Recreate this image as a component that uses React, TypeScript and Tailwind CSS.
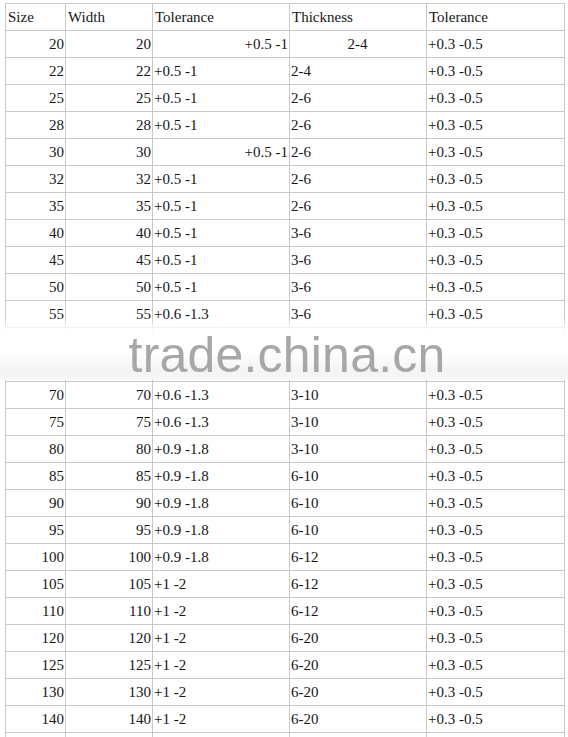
import React from "react";

type Row = {
  size: string;
  width: string;
  tol: string;
  thick: string;
  tol2: string;
  // some cells in the sheet keep odd alignments
  tolAlign?: "left" | "right";
  thickAlign?: "left" | "center";
};

const r = (size: string, tol: string, thick: string, extra: Partial<Row> = {}): Row => ({
  size,
  width: size,
  tol,
  thick,
  tol2: size ? "+0.3 -0.5" : "",
  ...extra,
});

const rows: Row[] = [
  r("20", "+0.5 -1", "2-4", { tolAlign: "right", thickAlign: "center" }),
  r("22", "+0.5 -1", "2-4"),
  r("25", "+0.5 -1", "2-6"),
  r("28", "+0.5 -1", "2-6"),
  r("30", "+0.5 -1", "2-6", { tolAlign: "right" }),
  r("32", "+0.5 -1", "2-6"),
  r("35", "+0.5 -1", "2-6"),
  r("40", "+0.5 -1", "3-6"),
  r("45", "+0.5 -1", "3-6"),
  r("50", "+0.5 -1", "3-6"),
  r("55", "+0.6 -1.3", "3-6"),
  // rows under the watermark, left blank
  r("", "", ""),
  r("", "", ""),
  r("70", "+0.6 -1.3", "3-10"),
  r("75", "+0.6 -1.3", "3-10"),
  r("80", "+0.9 -1.8", "3-10"),
  r("85", "+0.9 -1.8", "6-10"),
  r("90", "+0.9 -1.8", "6-10"),
  r("95", "+0.9 -1.8", "6-10"),
  r("100", "+0.9 -1.8", "6-12"),
  r("105", "+1 -2", "6-12"),
  r("110", "+1 -2", "6-12"),
  r("120", "+1 -2", "6-20"),
  r("125", "+1 -2", "6-20"),
  r("130", "+1 -2", "6-20"),
  r("140", "+1 -2", "6-20"),
  r("", "", ""),
];

const cell = "h-[27px] border-r border-b border-[#c9c9c9] flex items-center px-[2px] whitespace-nowrap";

export default function App() {
  return (
    <div className="relative bg-white min-h-[737px] pt-[3px] font-['Liberation_Serif',serif] text-[15px] text-[#161616]">
      <div className="ml-[5px] w-[560px] grid grid-cols-[60px_87px_137px_137px_138px] border-l border-t border-[#c9c9c9]">
        {/* header */}
        <div className={cell}>Size</div>
        <div className={cell}>Width</div>
        <div className={cell}>Tolerance</div>
        <div className={cell}>Thickness</div>
        <div className={cell}>Tolerance</div>

        {rows.map((row, i) => (
          <React.Fragment key={i}>
            <div className={`${cell} justify-end pr-[1px]`}>{row.size}</div>
            <div className={`${cell} justify-end pr-[1px]`}>{row.width}</div>
            <div className={`${cell} pl-[1px] ${row.tolAlign === "right" ? "justify-end pr-[1px]" : ""}`}>{row.tol}</div>
            <div className={`${cell} pl-[1px] ${row.thickAlign === "center" ? "justify-center" : ""}`}>{row.thick}</div>
            <div className={`${cell} pl-[1px]`}>{row.tol2}</div>
          </React.Fragment>
        ))}
      </div>

      {/* watermark band */}
      <div className="absolute left-0 right-0 top-[318px] h-[62px] flex items-end justify-center bg-[linear-gradient(to_bottom,rgba(255,255,255,0)_0%,rgba(255,255,255,0.9)_18%,#ffffff_32%,#ffffff_55%,#f3f3f3_85%,#f7f7f7_100%)]">
        <span className="pl-[6px] font-['Liberation_Sans',Arial,sans-serif] text-[50px] leading-none text-[#a7a7a7] tracking-[0.2px]">
          trade.china.cn
        </span>
      </div>
    </div>
  );
}
